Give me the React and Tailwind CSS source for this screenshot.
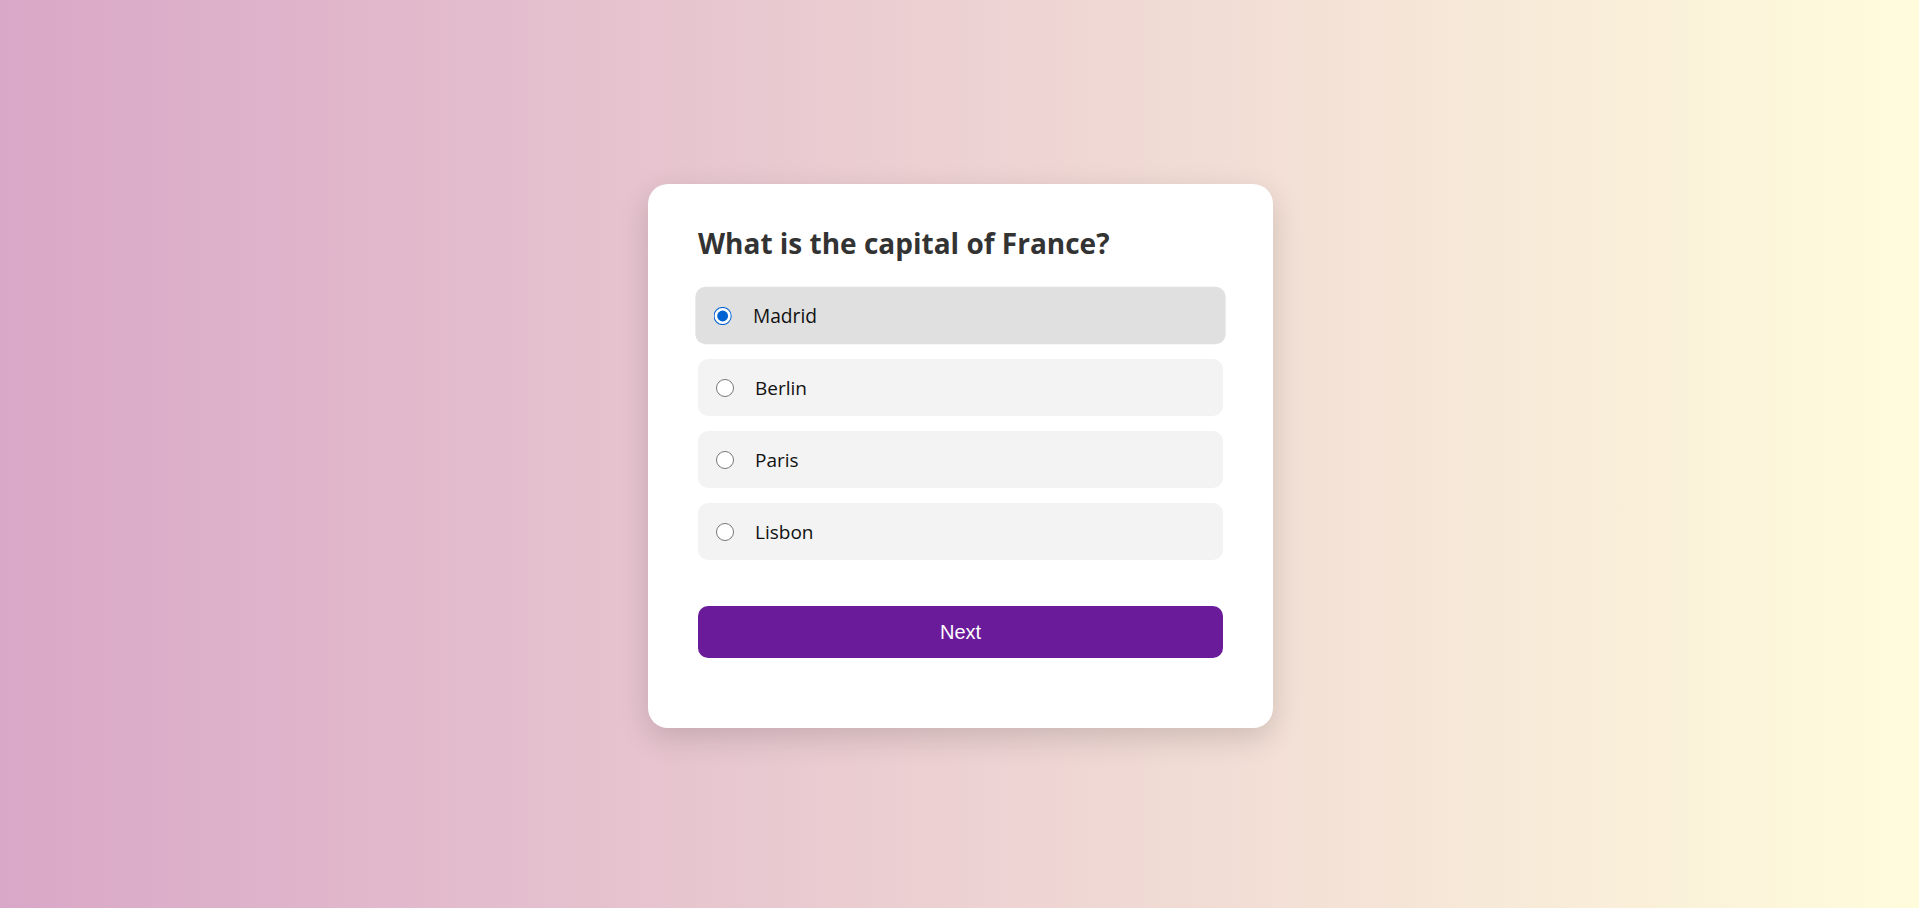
import { useState } from 'react';

const OPTIONS = ['Madrid', 'Berlin', 'Paris', 'Lisbon'];

function Option({ label, checked, onSelect }) {
  return (
    <label
      className={`flex h-[57px] items-center gap-[21px] rounded-[10px] pl-[18px] cursor-pointer transition-transform ${
        checked ? 'bg-[#e0e0e0] scale-[1.01]' : 'bg-[#f3f3f3]'
      }`}
    >
      <input
        type="radio"
        name="answer"
        checked={checked}
        onChange={onSelect}
        className="m-0 h-[18px] w-[18px] accent-[#0063d1]"
      />
      <span className="pt-[2px] text-[19px] text-[#111]">{label}</span>
    </label>
  );
}

export default function App() {
  const [answer, setAnswer] = useState('Madrid');

  return (
    <div
      className="flex h-[908px] items-center justify-center bg-gradient-to-r from-[#d9a7c7] to-[#fffcdc]"
      style={{ fontFamily: '"Open Sans", "Noto Sans", sans-serif' }}
    >
      <div className="mt-[4px] ml-[2px] w-[625px] rounded-[20px] bg-white px-[50px] pt-[41px] pb-[70px] shadow-[0_10px_30px_rgba(0,0,0,0.15)]">
        <h2 className="text-[28px] font-bold leading-[36px] text-[#333]">What is the capital of France?</h2>

        <div className="mt-[26px] flex flex-col gap-[15px]">
          {OPTIONS.map((opt) => (
            <Option key={opt} label={opt} checked={answer === opt} onSelect={() => setAnswer(opt)} />
          ))}
        </div>

        <button
          className="mt-[46px] h-[52px] w-full rounded-[10px] bg-[#6a1b9a] text-[20px] text-white"
          style={{ fontFamily: '"Liberation Sans", Arial, sans-serif' }}
        >
          Next
        </button>
      </div>
    </div>
  );
}
